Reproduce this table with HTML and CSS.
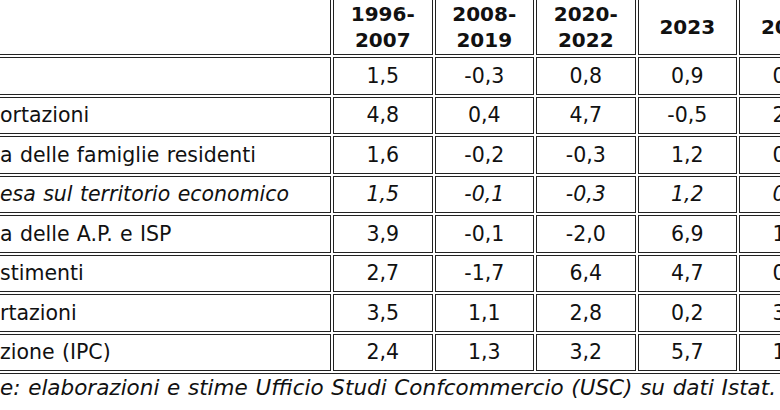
FILE: index.html
```html
<!DOCTYPE html>
<html lang="it">
<head>
<meta charset="utf-8">
<title>Tabella</title>
<link rel="stylesheet" href="styles.css">
</head>
<body>
<div class="frame">
  <table class="data">
    <thead>
      <tr>
        <th class="label"></th>
        <th>1996-<br>2007</th>
        <th>2008-<br>2019</th>
        <th>2020-<br>2022</th>
        <th>2023</th>
        <th>2024</th>
      </tr>
    </thead>
    <tbody>
      <tr><td class="label"></td><td>1,5</td><td>-0,3</td><td>0,8</td><td>0,9</td><td>0,7</td></tr>
      <tr><td class="label">ortazioni</td><td>4,8</td><td>0,4</td><td>4,7</td><td>-0,5</td><td>2,2</td></tr>
      <tr><td class="label">a delle famiglie residenti</td><td>1,6</td><td>-0,2</td><td>-0,3</td><td>1,2</td><td>0,5</td></tr>
      <tr class="sub"><td class="label">esa sul territorio economico</td><td>1,5</td><td>-0,1</td><td>-0,3</td><td>1,2</td><td>0,4</td></tr>
      <tr><td class="label">a delle A.P. e ISP</td><td>3,9</td><td>-0,1</td><td>-2,0</td><td>6,9</td><td>1,2</td></tr>
      <tr><td class="label">stimenti</td><td>2,7</td><td>-1,7</td><td>6,4</td><td>4,7</td><td>0,3</td></tr>
      <tr><td class="label">rtazioni</td><td>3,5</td><td>1,1</td><td>2,8</td><td>0,2</td><td>3,1</td></tr>
      <tr><td class="label">zione (IPC)</td><td>2,4</td><td>1,3</td><td>3,2</td><td>5,7</td><td>1,2</td></tr>
    </tbody>
  </table>
</div>
<p class="source">e: elaborazioni e stime Ufficio Studi Confcommercio (USC) su dati Istat.</p>
</body>
</html>
```
FILE: styles.css
```css
html, body {
  margin: 0;
  padding: 0;
  overflow: hidden;
  background: #ffffff;
}

body {
  width: 780px;
  height: 410px;
  font-family: "DejaVu Sans", Verdana, sans-serif;
  font-size: 20.5px;
  color: #111111;
}

.frame {
  margin: -4px 0 0 -9px;
  width: 860px;
}

.data {
  table-layout: fixed;
  width: 850.5px;
  border-collapse: separate;
  border-spacing: 2px;
  border: 1px solid #222222;
}

.data th,
.data td {
  box-sizing: border-box;
  border: 1px solid #222222;
  padding: 0;
  text-align: center;
  vertical-align: middle;
  white-space: nowrap;
  overflow: hidden;
  width: 99.5px;
}

.data th {
  height: 56px;
  font-size: 20px;
  font-weight: bold;
  line-height: 26px;
}

.data td {
  height: 37.5px;
  line-height: 22px;
}

.data th.label,
.data td.label {
  width: 337px;
  text-align: left;
  padding-left: 5px;
  word-spacing: 0.04em;
}

.data .sub td {
  font-style: italic;
}

.source {
  margin: 3px 0 0 0;
  font-size: 21.5px;
  font-style: italic;
  line-height: 22px;
  word-spacing: 0.04em;
  white-space: nowrap;
}
```
